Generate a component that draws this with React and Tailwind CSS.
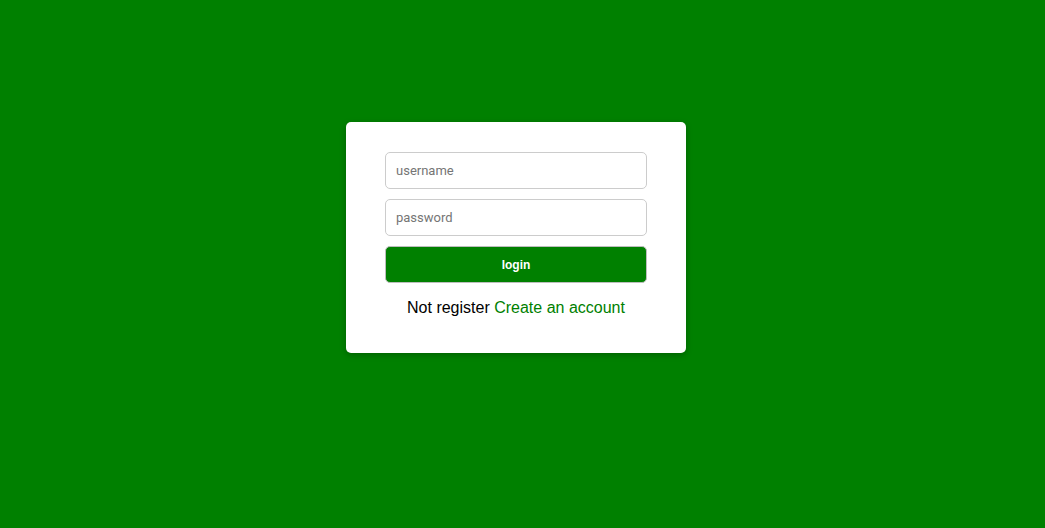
export default function App() {
  return (
    <div className="w-[1045px] h-[528px] bg-[#008000] pt-[122px] pl-[346px]" style={{ fontFamily: '"Liberation Sans", Arial, sans-serif' }}>
      <div className="w-[340px] h-[231px] bg-white rounded-[5px] shadow-[0_2px_6px_rgba(0,0,0,0.25)] px-[39px] pt-[30px] flex flex-col">
        <input
          className="h-[37px] w-[262px] border border-[#cccccc] rounded-[5px] px-[10px] text-[13px] text-[#333] placeholder:text-[#757575] outline-none"
          style={{ fontFamily: 'Roboto, "Liberation Sans", sans-serif' }}
          placeholder="username"
        />
        <input
          className="mt-[10px] h-[37px] w-[262px] border border-[#cccccc] rounded-[5px] px-[10px] text-[13px] text-[#333] placeholder:text-[#757575] outline-none"
          style={{ fontFamily: 'Roboto, "Liberation Sans", sans-serif' }}
          placeholder="password"
          type="password"
        />
        <button className="mt-[10px] h-[37px] w-[262px] bg-[#008000] border border-[#bdbdbd] rounded-[5px] text-white text-[12px] font-bold">
          login
        </button>
        <p className="mt-[16px] text-center text-[16px] leading-[18px] text-black">
          Not register <span className="text-[#008000]">Create an account</span>
        </p>
      </div>
    </div>
  );
}
